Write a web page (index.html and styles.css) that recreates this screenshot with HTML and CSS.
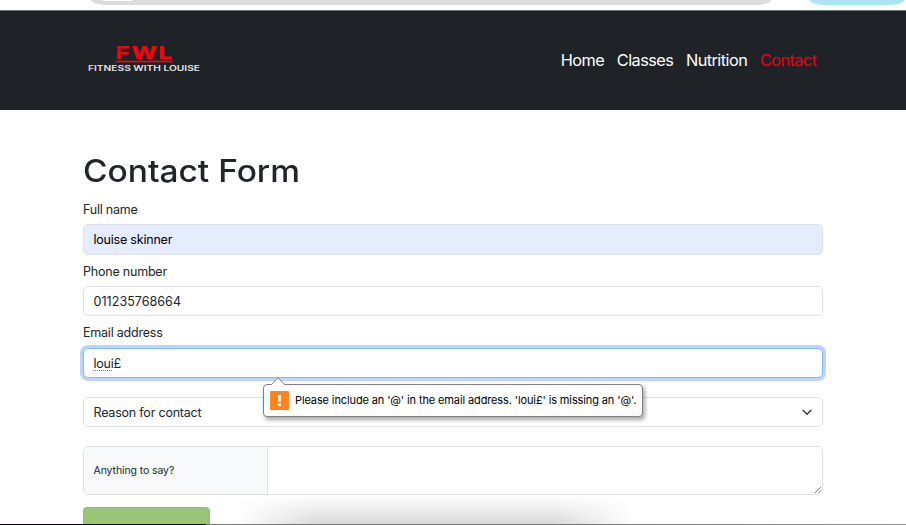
FILE: index.html
```html
<!DOCTYPE html>
<html lang="en">
<head>
<meta charset="utf-8">
<title>Contact - Fitness with Louise</title>
<link rel="stylesheet" href="styles.css">
</head>
<body>
<div class="browser-bar"><div class="address"><span class="chip"></span></div><div class="profile"></div></div>
<header class="navbar">
  <svg class="logo" width="114" height="34" viewBox="0 -4 114 34" role="img" aria-label="FWL Fitness with Louise">
    <text class="logo-mark" x="27.500" y="15" textLength="58" lengthAdjust="spacingAndGlyphs">FWL</text>
    <path class="logo-cut" d="M28 5.500h15M33 1v14"/>
    <rect class="logo-rule" x="28" y="16.700" width="57" height="1.600"/>
    <text class="logo-name" x="0" y="27" textLength="112" lengthAdjust="spacingAndGlyphs">FITNESS WITH LOUISE</text>
  </svg>
  <nav class="links"><a>Home</a><a>Classes</a><a>Nutrition</a><a class="active">Contact</a></nav>
</header>
<main class="content">
  <h1><span>Contact Form</span></h1>
  <label class="label">Full name</label>
  <div class="control filled">louise skinner</div>
  <label class="label">Phone number</label>
  <div class="control phone">011235768664</div>
  <label class="label email">Email address</label>
  <div class="control focused"><span class="misspelled">loui</span>£
    <div class="bubble">
      <svg class="pointer" width="14" height="8" viewBox="0 0 14 8"><path d="M0 8L7 .8L14 8" fill="#fff" stroke="#8a8a8a"/></svg>
      <svg class="warn" width="19" height="19" viewBox="0 0 19 19"><rect width="19" height="19" rx="1" fill="#fd8423"/><path d="M8 4h3l-.5 7h-2zM8 12.500h3v2.500H8z" fill="#fff"/></svg>
      <span>Please include an '@' in the email address. 'loui£' is missing an '@'.</span>
    </div>
  </div>
  <div class="control select"><span>Reason for contact</span>
    <svg width="10" height="7" viewBox="0 0 10 7"><path d="M1 1.300L5 5.200L9 1.300" fill="none" stroke="#343a40" stroke-width="1.400" stroke-linecap="round" stroke-linejoin="round"/></svg>
  </div>
  <div class="message"><div class="prefix">Anything to say?</div><div class="area"><svg width="8" height="8" viewBox="0 0 8 8"><path d="M1 7L7 1M4.500 7L7 4.500" stroke="#777" fill="none"/></svg></div></div>
  <div class="submit"></div>
</main>
<div class="dock-shadow"></div>
<div class="screen-edge"></div>
</body>
</html>
```

FILE: styles.css
```css
* { box-sizing: border-box; }
body { margin: 0; height: 525px; overflow: hidden; position: relative; background: #fff; color: #212529; font: 12.5px/18px Inter, "Liberation Sans", sans-serif; letter-spacing: -.21px; }
.browser-bar { height: 10px; display: flex; align-items: flex-start; padding-left: 91px; }
.address { width: 680px; height: 5px; background: #dcdcdc; border-radius: 0 0 16px 16px / 0 0 5px 5px; margin-right: 39px; }
.chip { display: block; width: 30px; height: 1px; margin-left: 12px; background: #fff; border-radius: 0 0 8px 8px; }
.profile { width: 94px; height: 5px; background: #ace4f0; border-radius: 0 0 14px 14px / 0 0 5px 5px; }
.navbar { height: 100px; background: #1f2226; border-top: 1px solid #71767a; display: flex; justify-content: space-between; align-items: center; padding: 0 89px 0 88px; }
.logo { align-self: flex-start; margin-top: 29px; overflow: visible; letter-spacing: 0; }
.logo-mark { font: 800 18px Inter, sans-serif; fill: #f4040f; letter-spacing: 1px; }
.logo-cut { stroke: #1f2226; stroke-width: .5; }
.logo-rule { fill: #f4040f; }
.logo-name { font: 600 7.6px Inter, sans-serif; fill: #e4e4e5; }
.links { display: flex; gap: 12.7px; margin: -2px .5px 0 0; font-size: 16.3px; line-height: 24px; color: #fff; letter-spacing: -.55px; }
.active { color: #f0000e; }
.content { width: 740px; margin-left: 83px; padding-top: 42px; }
h1 { margin: 0; height: 48px; font: 500 31px/37px Inter, sans-serif; letter-spacing: 0; }
h1 span { display: inline-block; transform: scaleX(1.08); transform-origin: left; }
.label { display: block; height: 24px; line-height: 19px; }
.email { height: 25px; }
.control { height: 31px; border: 1px solid #dee2e6; border-radius: 5px; padding: 0 9.500px; line-height: 29px; background: #fff; }
.filled { background: #e4ecfe; color: #000; margin-bottom: 7px; }
.phone { height: 30px; margin-bottom: 7px; letter-spacing: .05px; }
.focused { position: relative; height: 30px; border-color: #86b7fe; box-shadow: 0 0 0 3px #bdd5fc; margin-bottom: 19px; }
.misspelled { text-decoration: underline dotted #ef4444 1px; text-underline-offset: 2px; }
.bubble { position: absolute; z-index: 2; left: 179px; top: 35px; width: 380px; height: 33px; display: flex; align-items: center; gap: 6px; padding: 0 6px 1px; background: #fff; border: 1px solid #808080; border-radius: 4px; box-shadow: 2px 3px 4px rgba(0,0,0,.35); color: #000; font-size: 11px; line-height: 16px; letter-spacing: -.12px; white-space: nowrap; }
.warn { flex: none; }
.pointer { position: absolute; left: 7px; top: -8px; }
.select { height: 30px; display: flex; justify-content: space-between; align-items: center; padding-right: 10px; margin-bottom: 19px; }
.message { display: flex; height: 49px; border: 1px solid #dee2e6; border-radius: 5px; overflow: hidden; margin-bottom: 12px; }
.prefix { width: 184px; background: #f7f9fb; border-right: 1px solid #dee2e6; padding-left: 9.500px; font-size: 10.5px; line-height: 48px; letter-spacing: -.1px; }
.area { flex: 1; display: flex; justify-content: flex-end; align-items: flex-end; }
.submit { width: 127px; height: 30px; background: #99c578; border: 1px solid #8dbe6a; border-radius: 4px; }
.dock-shadow { position: absolute; left: 235px; top: 495px; width: 400px; height: 29px; background: linear-gradient(to bottom, transparent, rgba(0,0,0,.15)); -webkit-mask-image: linear-gradient(to right, transparent, #000 20%, #000 80%, transparent); mask-image: linear-gradient(to right, transparent, #000 20%, #000 80%, transparent); }
.screen-edge { position: absolute; left: 0; top: 524px; width: 906px; height: 1px; background: linear-gradient(to right, #08030c 206px, #777 206px, #777 650px, #999); }
```
